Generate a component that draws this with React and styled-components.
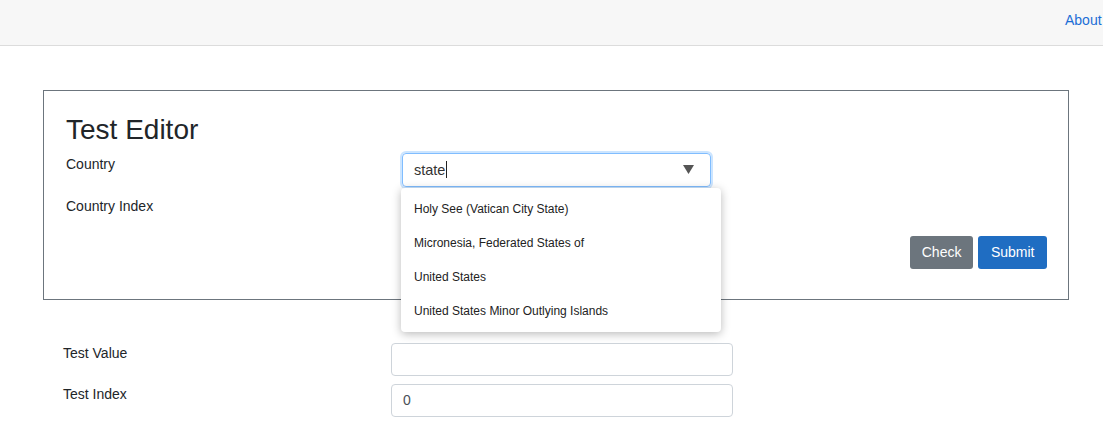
import React from "react";
import styled, { createGlobalStyle } from "styled-components";

const GlobalStyle = createGlobalStyle`
  body {
    margin: 0;
    font-family: "Liberation Sans", Arial, sans-serif;
    color: #212529;
    background: #fff;
  }
`;

const NavBar = styled.nav`
  height: 45px;
  background: #f7f7f7;
  border-bottom: 1px solid #dcdcdc;
  display: flex;
  align-items: center;
  justify-content: flex-end;
  overflow: hidden;
`;

const NavLink = styled.a`
  font-size: 14px;
  color: #1b6ed6;
  text-decoration: none;
  margin-right: -8px;
  margin-top: -6px;
  width: 46px;
`;

const Main = styled.main`
  padding: 44px 0 0 43px;
  width: 1026px;
`;

const EditorBox = styled.section`
  border: 1px solid #6c757d;
  padding: 22px 21px 30px 22px;
`;

const Title = styled.h2`
  margin: 0 0 6px;
  font-size: 28px;
  font-weight: 400;
  line-height: 1.2;
  color: #212529;
`;

const FormRow = styled.div`
  display: flex;
  align-items: flex-start;
  height: ${p => p.h || 34}px;
  margin-bottom: ${p => p.mb || 7}px;
`;

const Label = styled.div`
  width: ${p => p.w}px;
  font-size: 14px;
  line-height: 21px;
  padding-top: ${p => p.pt || 0}px;
`;

const ComboWrap = styled.div`
  position: relative;
`;

const Combo = styled.div`
  width: 309px;
  height: 34px;
  box-sizing: border-box;
  border: 1px solid #80bdff;
  border-radius: 4px;
  box-shadow: 0 0 0 2px rgba(0, 123, 255, 0.2);
  display: flex;
  align-items: center;
  padding: 0 16px 0 11px;
  font-size: 14.5px;
  color: #333;
`;

const Caret = styled.span`
  display: inline-block;
  width: 1px;
  height: 17px;
  background: #222;
  margin-left: 1px;
`;

const Arrow = styled.svg`
  margin-left: auto;
`;

const Menu = styled.ul`
  position: absolute;
  top: 35px;
  left: -1px;
  width: 320px;
  margin: 0;
  padding: 4px 0;
  list-style: none;
  background: #fff;
  border-radius: 4px;
  box-shadow: 0 2px 10px rgba(0, 0, 0, 0.28);
  z-index: 10;
`;

const MenuItem = styled.li`
  height: 34px;
  display: flex;
  align-items: center;
  padding-left: 13px;
  font-size: 12px;
  color: #222;
`;

const Actions = styled.div`
  display: flex;
  justify-content: flex-end;
  gap: 5px;
`;

const Button = styled.button`
  font-family: inherit;
  font-size: 14px;
  line-height: 21px;
  height: 33px;
  padding: 6px ${p => (p.primary ? 12.5 : 12)}px;
  border: none;
  border-radius: 3px;
  color: #fff;
  background: ${p => (p.primary ? "#1f6dc2" : "#6c757d")};
`;

const Lower = styled.div`
  padding: 43px 0 0 20px;
`;

const TextInput = styled.div`
  width: 342px;
  height: 33px;
  box-sizing: border-box;
  border: 1px solid #ced4da;
  border-radius: 4px;
  display: flex;
  align-items: center;
  padding: 0 11px;
  font-size: 14px;
  color: #495057;
`;

const countries = [
  "Holy See (Vatican City State)",
  "Micronesia, Federated States of",
  "United States",
  "United States Minor Outlying Islands",
];

export default function App() {
  return (
    <>
      <GlobalStyle />
      <NavBar>
        <NavLink href="#">About</NavLink>
      </NavBar>
      <Main>
        <EditorBox>
          <Title>Test Editor</Title>
          <FormRow>
            <Label w={336} pt={1}>Country</Label>
            <ComboWrap>
              <Combo>
                state<Caret />
                <Arrow width="11" height="9" viewBox="0 0 11 9">
                  <path d="M0 0h11L5.5 9z" fill="#555" />
                </Arrow>
              </Combo>
              <Menu>
                {countries.map(c => (
                  <MenuItem key={c}>{c}</MenuItem>
                ))}
              </Menu>
            </ComboWrap>
          </FormRow>
          <FormRow mb={8}>
            <Label w={336} pt={2}>Country Index</Label>
          </FormRow>
          <Actions>
            <Button>Check</Button>
            <Button primary>Submit</Button>
          </Actions>
        </EditorBox>
        <Lower>
          <FormRow h={33} mb={8}>
            <Label w={328}>Test Value</Label>
            <TextInput />
          </FormRow>
          <FormRow h={33} mb={8}>
            <Label w={328}>Test Index</Label>
            <TextInput>0</TextInput>
          </FormRow>
        </Lower>
      </Main>
    </>
  );
}
